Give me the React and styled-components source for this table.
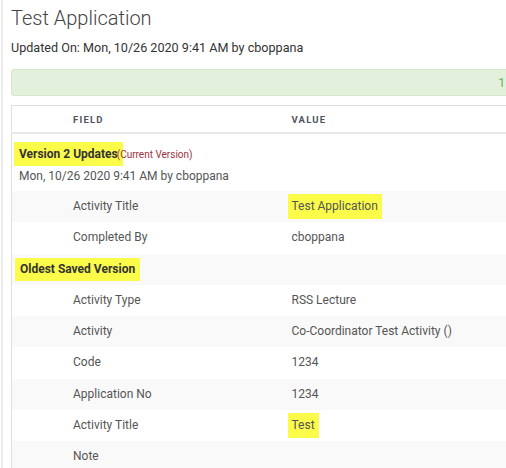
import React from 'react';
import styled, { createGlobalStyle } from 'styled-components';

const Global = createGlobalStyle`
  html, body {
    margin: 0;
    background: #fff;
    overflow: hidden;
  }
  body {
    font-family: Roboto, "Liberation Sans", sans-serif;
    color: #555;
  }
`;

const rows = [
  { type: 'version', title: 'Version 2 Updates', note: '(Current Version)', date: 'Mon, 10/26 2020 9:41 AM by cboppana' },
  { field: 'Activity Title', value: 'Test Application', mark: true },
  { field: 'Completed By', value: 'cboppana' },
  { type: 'version', title: 'Oldest Saved Version' },
  { field: 'Activity Type', value: 'RSS Lecture' },
  { field: 'Activity', value: 'Co-Coordinator Test Activity ()' },
  { field: 'Code', value: '1234' },
  { field: 'Application No', value: '1234' },
  { field: 'Activity Title', value: 'Test', mark: true },
  { field: 'Note', value: '' },
];

export default function App() {
  return (
    <Page>
      <Global />
      <Title>Test Application</Title>
      <Sub>Updated On: Mon, 10/26 2020 9:41 AM by cboppana</Sub>
      <Alert>1</Alert>
      <Table>
        <colgroup>
          <col style={{ width: 280 }} />
          <col />
        </colgroup>
        <thead>
          <tr>
            <Th>Field</Th>
            <Th>Value</Th>
          </tr>
        </thead>
        <tbody>
          {rows.map((r, i) =>
            r.type === 'version' ? (
              <Row key={i} $odd={i % 2 === 1}>
                <VersionCell colSpan={2} $tall={!!r.date}>
                  <VersionMark $tall={!!r.date}>{r.title}</VersionMark>
                  {r.note && <Current>{r.note}</Current>}
                  {r.date && <DateLine>{r.date}</DateLine>}
                </VersionCell>
              </Row>
            ) : (
              <Row key={i} $odd={i % 2 === 1}>
                <FieldCell>{r.field}</FieldCell>
                <ValueCell>{r.mark ? <Mark>{r.value}</Mark> : r.value}</ValueCell>
              </Row>
            )
          )}
        </tbody>
      </Table>
    </Page>
  );
}

const Page = styled.div`
  width: 600px;
  min-height: 468px;
  box-sizing: border-box;
  margin-left: 1px;
  border-left: 2px solid #ececec;
  padding: 5px 0 0 8px;
`;

const Title = styled.h1`
  margin: 0;
  font-size: 20px;
  font-weight: 300;
  color: #444;
  line-height: 26px;
`;

const Sub = styled.div`
  margin-top: 9px;
  font-size: 12.6px;
  color: #333;
  line-height: 16px;
`;

const Alert = styled.div`
  margin-top: 13px;
  height: 25px;
  border: 1px solid #d3e8c8;
  border-radius: 3px;
  background: #e3f1dc;
  color: #6fb35f;
  font-size: 13px;
  line-height: 25px;
  padding-left: 486px;
`;

const Table = styled.table`
  margin-top: 9px;
  width: 100%;
  border-collapse: collapse;
  table-layout: fixed;
  border: 1px solid #e0e0e0;
`;

const Th = styled.th`
  text-align: left;
  text-transform: uppercase;
  font-size: 9.5px;
  font-weight: 700;
  letter-spacing: 1.2px;
  color: #4f5560;
  height: 26px;
  padding: 0 0 0 61px;
  border-bottom: 2px solid #e8e8e8;
  &:last-child {
    padding-left: 0;
  }
`;

const Row = styled.tr`
  background: ${p => (p.$odd ? '#f9f9f9' : '#fff')};
`;

const FieldCell = styled.td`
  font-size: 12px;
  line-height: 15.3px;
  padding: 8px 0 8px 61px;
`;

const ValueCell = styled.td`
  font-size: 12px;
  line-height: 15.3px;
  padding: 8px 0;
`;

const VersionCell = styled.td`
  padding: ${p => (p.$tall ? '8px 0 7px 2px' : '4px 0 4px 3px')};
  font-size: 12px;
`;

const Mark = styled.span`
  display: inline-block;
  background: #fbfb4a;
  padding: 5px 4px;
  margin: -5px 0 -5px -4px;
  line-height: 15px;
  color: #555;
`;

const VersionMark = styled.span`
  display: inline-block;
  background: #fbfb4a;
  padding: 5px;
  line-height: ${p => (p.$tall ? '14px' : '13.3px')};
  color: #333;
  font-weight: 700;
  font-size: 12px;
`;

const Current = styled.span`
  position: relative;
  margin-left: -6px;
  font-size: 10px;
  color: #a0303a;
`;

const DateLine = styled.div`
  margin-top: 2px;
  padding-left: 5px;
  font-size: 12px;
  line-height: 16px;
  color: #555;
`;
